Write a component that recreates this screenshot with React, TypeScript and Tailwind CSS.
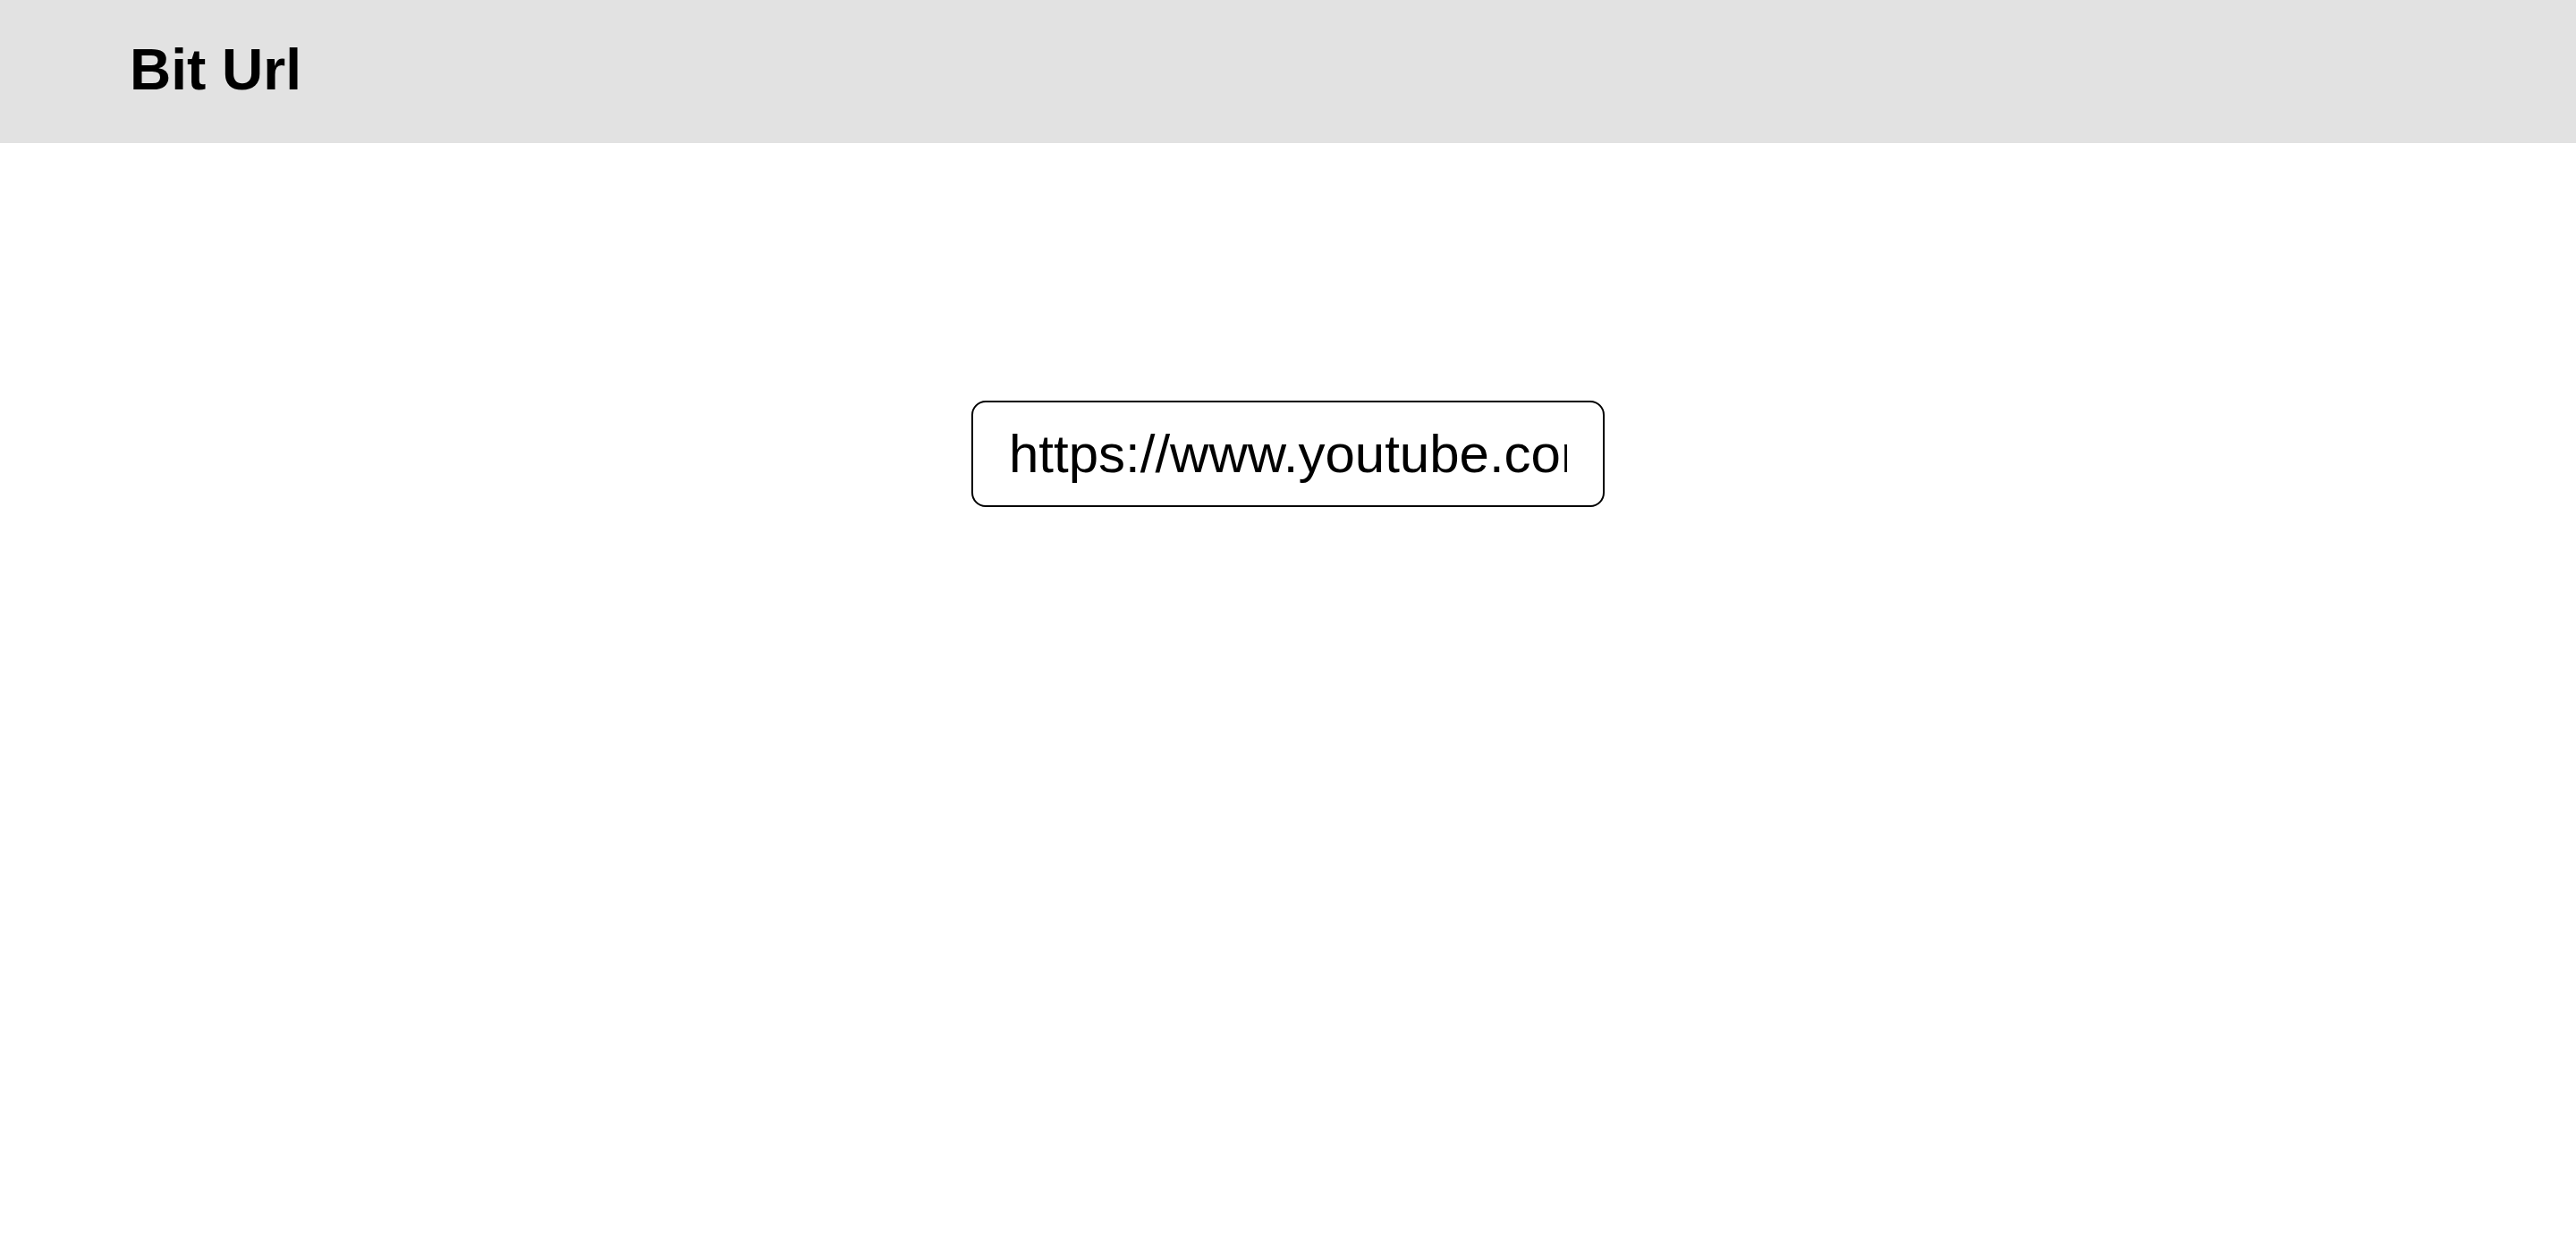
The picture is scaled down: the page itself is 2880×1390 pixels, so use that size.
import React, { useState } from 'react';

const App: React.FC = () => {
  const [url, setUrl] = useState('https://www.youtube.com/watch?v=dQw4w9WgXcQ');

  return (
    <div className="min-h-screen bg-white font-['Liberation_Sans',Arial,sans-serif] text-black">
      <header className="h-[160px] bg-[#e2e2e2] flex items-center px-[145px] pb-[4px]">
        <h1 className="text-[64px] font-bold leading-none">Bit Url</h1>
      </header>

      <main className="flex justify-center pt-[288px]">
        <input
          type="text"
          value={url}
          onChange={(e) => setUrl(e.target.value)}
          className="w-[708px] h-[119px] px-[40px] border-2 border-black rounded-[16px] text-[60px] bg-white focus:outline-none"
        />
      </main>
    </div>
  );
};

export default App;
